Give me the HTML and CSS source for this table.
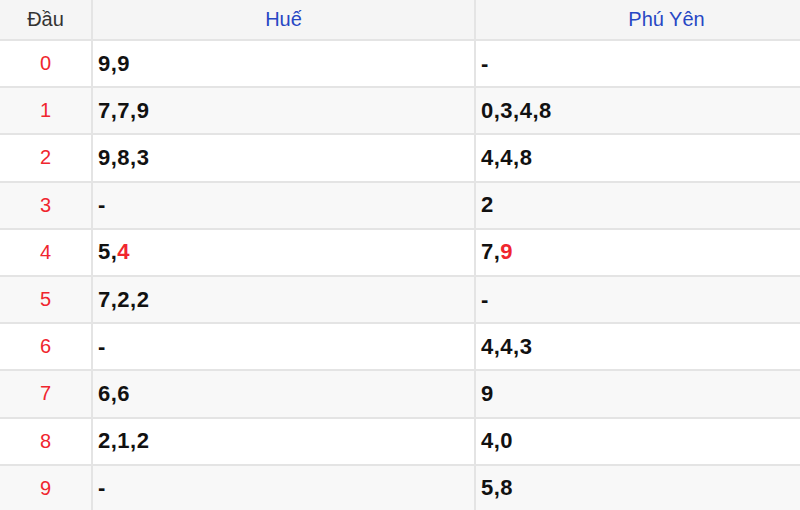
FILE: index.html
```html
<!DOCTYPE html>
<html lang="vi">
<head>
<meta charset="utf-8">
<link rel="stylesheet" href="styles.css">
</head>
<body>
<table class="loto">
  <colgroup>
    <col class="c-head">
    <col class="c-prov">
    <col class="c-prov">
  </colgroup>
  <thead>
    <tr><th>Đầu</th><th class="prov">Huế</th><th class="prov">Phú Yên</th></tr>
  </thead>
  <tbody>
    <tr><td class="dau">0</td><td>9,9</td><td>-</td></tr>
    <tr><td class="dau">1</td><td>7,7,9</td><td>0,3,4,8</td></tr>
    <tr><td class="dau">2</td><td>9,8,3</td><td>4,4,8</td></tr>
    <tr><td class="dau">3</td><td>-</td><td>2</td></tr>
    <tr><td class="dau">4</td><td>5,<span class="hl">4</span></td><td>7,<span class="hl">9</span></td></tr>
    <tr><td class="dau">5</td><td>7,2,2</td><td>-</td></tr>
    <tr><td class="dau">6</td><td>-</td><td>4,4,3</td></tr>
    <tr><td class="dau">7</td><td>6,6</td><td>9</td></tr>
    <tr><td class="dau">8</td><td>2,1,2</td><td>4,0</td></tr>
    <tr><td class="dau">9</td><td>-</td><td>5,8</td></tr>
  </tbody>
</table>
</body>
</html>
```
FILE: styles.css
```css
html, body {
  margin: 0;
  padding: 0;
  background: #fff;
  overflow: hidden;
}
body {
  width: 800px;
  height: 510px;
}
.loto {
  border-collapse: collapse;
  width: 858px;
  table-layout: fixed;
  font-family: "Liberation Sans", Arial, sans-serif;
}
.c-head { width: 92px; }
.c-prov { width: 383px; }
.loto th, .loto td {
  border: 2px solid #e4e4e4;
  padding: 0 5px;
}
.loto tr:first-child th { border-top: none; }
.loto th:first-child, .loto td:first-child { border-left: none; }
.loto th {
  height: 39px;
  background: #f5f5f5;
  font-weight: normal;
  font-size: 20px;
  color: #333;
  text-align: center;
}
.loto th.prov { color: #2747c4; }
.loto td {
  height: 45.2px;
  font-size: 22px;
  letter-spacing: 0.5px;
  font-weight: bold;
  color: #111;
}
.loto tbody tr:nth-child(even) td { background: #f8f8f8; }
.loto td.dau {
  text-align: center;
  font-weight: normal;
  font-size: 20px;
  letter-spacing: 0;
  color: #f0262e;
}
.hl { color: #f0262e; }
```
